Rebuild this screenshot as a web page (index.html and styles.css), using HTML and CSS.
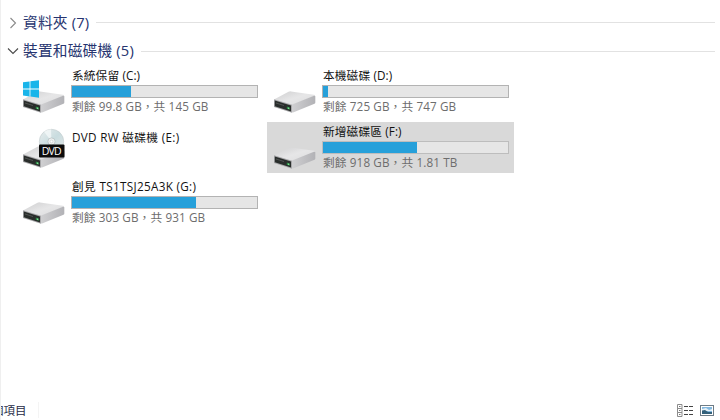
FILE: index.html
```html
<!DOCTYPE html>
<html lang="zh-Hant-TW">
<head>
<meta charset="UTF-8">
<title>本機</title>
<link rel="stylesheet" href="styles.css">
</head>
<body>

<!-- shared drive icon -->
<svg class="defs" width="0" height="0">
  <defs>
    <linearGradient id="top" x1="0" y1="0" x2="1" y2="1">
      <stop offset="0" stop-color="#cfcfd0"/><stop offset=".5" stop-color="#e6e6e7"/><stop offset="1" stop-color="#dcdcdd"/>
    </linearGradient>
    <linearGradient id="side" x1="0" y1="0" x2="1" y2="0">
      <stop offset="0" stop-color="#d0d0d2"/><stop offset="1" stop-color="#b2b2b6"/>
    </linearGradient>
    <linearGradient id="disc" x1="0" y1="0" x2="1" y2="1">
      <stop offset="0" stop-color="#e9eeee"/><stop offset=".5" stop-color="#c9dcdf"/><stop offset="1" stop-color="#e6e9e9"/>
    </linearGradient>
    <symbol id="drive" viewBox="0 0 42 22">
      <path fill="url(#top)" d="M0 8.4 14.5 .8Q15.7 .2 17 .4L40 3.8Q41 4 41 4.8L18 14.2Z"/>
      <path fill="url(#side)" d="M17.5 13.8 40 4.8Q41.3 4.4 41.3 5.6V11.6Q41.3 12.4 40.5 12.8L19 21.6 17.5 21.6Z"/>
      <path fill="#a7a7a9" d="M0 8.2 18 13.8V21.8L0 16Z"/>
      <path fill="#292d2b" d="M.8 9.4 17 14.4V20.5L.8 15.3Z"/>
      <path fill="#515453" d="M2 11.4 10 13.9V14.9L2 12.4Z"/>
      <path fill="#2f8a48" d="M12.8 15.4 15.8 16.4V18.8L12.8 17.8Z"/>
      <circle fill="#8be59a" cx="14.6" cy="17.2" r=".7"/>
    </symbol>
  </defs>
</svg>

<div class="pane">
  <div class="group folders">
    <svg class="arrow" width="12" height="12" viewBox="0 0 12 12"><path d="M3.5 1 8.5 6 3.5 11"/></svg>
    <h2>資料夾 (7)</h2>
    <hr>
  </div>
  <div class="group devices">
    <svg class="arrow open" width="12" height="12" viewBox="0 0 12 12"><path d="M1 3.5 6 8.5 11 3.5"/></svg>
    <h2>裝置和磁碟機 (5)</h2>
    <hr>
  </div>

  <div class="tiles">
    <div class="tile">
      <svg class="icon" viewBox="0 0 42 47">
        <use href="#drive" y="25" width="42" height="22"/>
        <path fill="#19b5ea" d="M0 16.3 6.6 15.4V22.5H0ZM7.4 15.3 16 14.2V22.5H7.4ZM0 23.4H6.6V30.4L0 29.6ZM7.4 23.4H16V31.8L7.4 30.6Z"/>
      </svg>
      <div class="info">
        <div class="name">系統保留 (C:)</div>
        <div class="bar"><div class="fill" style="width:59px"></div></div>
        <div class="free">剩餘 99.8 GB，共 145 GB</div>
      </div>
    </div>

    <div class="tile">
      <svg class="icon" viewBox="0 0 42 47"><use href="#drive" y="25" width="42" height="22"/></svg>
      <div class="info">
        <div class="name">本機磁碟 (D:)</div>
        <div class="bar"><div class="fill" style="width:5px"></div></div>
        <div class="free">剩餘 725 GB，共 747 GB</div>
      </div>
    </div>

    <div class="tile">
      <svg class="icon" viewBox="0 0 42 47">
        <use href="#drive" y="24" width="42" height="22"/>
        <circle cx="28.5" cy="19.5" r="12.2" fill="url(#disc)" stroke="#c2cbcc" stroke-width=".6"/>
        <path fill="#f6fafa" opacity=".75" d="M28.5 19.5 21 9.8A12 12 0 0 1 28 7.3Z"/>
        <circle cx="28.5" cy="19.5" r="3.6" fill="#eef1f1" stroke="#b3bcbd" stroke-width=".7"/>
        <circle cx="28.5" cy="19.5" r="1.4" fill="#fff" stroke="#b3bcbd" stroke-width=".5"/>
        <rect x="16" y="22.5" width="25.5" height="13" rx="1" fill="#0c0c0c"/>
        <text class="dvd" x="28.7" y="33" text-anchor="middle" textLength="20">DVD</text>
      </svg>
      <div class="info single">
        <div class="name wide">DVD RW 磁碟機 (E:)</div>
      </div>
    </div>

    <div class="tile selected">
      <svg class="icon" viewBox="0 0 42 47"><use href="#drive" y="25" width="42" height="22"/></svg>
      <div class="info">
        <div class="name">新增磁碟區 (F:)</div>
        <div class="bar"><div class="fill" style="width:94px"></div></div>
        <div class="free">剩餘 918 GB，共 1.81 TB</div>
      </div>
    </div>

    <div class="tile">
      <svg class="icon" viewBox="0 0 42 47"><use href="#drive" y="25" width="42" height="22"/></svg>
      <div class="info">
        <div class="name wide">創見 TS1TSJ25A3K (G:)</div>
        <div class="bar"><div class="fill" style="width:124px"></div></div>
        <div class="free">剩餘 303 GB，共 931 GB</div>
      </div>
    </div>
  </div>

  <div class="status">
    <span class="count">個項目</span>
    <div class="views">
      <!-- details view -->
      <svg width="17" height="13" viewBox="0 0 17 13">
        <g fill="#fff" stroke="#8b8b8b" stroke-width="1"><path d="M.5 .5H5V4.5H.5ZM.5 4.5H5V8.5H.5ZM.5 8.5H5V12.5H.5Z"/></g>
        <path stroke="#777" d="M2 2.5H3.5M2 6.5H3.5M2 10.5H3.5"/>
        <path stroke="#444" stroke-dasharray="4 1" d="M7 2.5H16M7 6.5H16M7 10.5H16"/>
      </svg>
      <!-- large icons view -->
      <svg width="14" height="11" viewBox="0 0 14 11">
        <rect x=".5" y=".5" width="13" height="10" fill="#fff" stroke="#6e7c86"/>
        <rect x="2" y="2" width="10" height="7" fill="#83b8df"/>
        <path fill="#e5f1f8" d="M2 4 6 3 9 5 12 4V6H2Z"/>
        <path fill="#33617b" d="M2 5.5 5 5 8 7H12V9H2Z"/>
      </svg>
    </div>
  </div>
</div>

</body>
</html>
```

FILE: styles.css
```css
*{box-sizing:border-box}
body{margin:0;background:#fff;font-family:"Open Sans","Noto Sans CJK TC",sans-serif;overflow:hidden}
.defs{display:block}
.pane{width:720px;height:420px;border-left:1px solid #efefef;display:flex;flex-direction:column;overflow:hidden}

/* group headers */
.group{display:flex;align-items:center;height:28px;padding:0 5px 0 6px;flex:none}
.folders{margin-top:8px;height:29px}
.arrow{fill:none;stroke:#8a8a8a;stroke-width:1.1;margin-right:4px;flex:none}
.arrow.open{stroke:#4a4a4a}
.group h2{margin:-2px 0 0;font-size:14.7px;font-weight:400;line-height:26px;letter-spacing:.2px;color:#26346f;white-space:nowrap}
.group hr{flex:1;margin:0 0 0 7px;border:0;border-top:1px solid #e2e2e2}

/* drives */
.tiles{display:grid;grid-template-columns:247px 247px;grid-template-rows:52px 51px 51px;gap:4px;margin:1px 0 0 15px}
.tile{display:flex;padding-left:7px}
.selected{background:#d9d9d9}
.icon{width:42px;height:47px;margin-right:6px;flex:none}
.dvd{font:10.5px "Open Sans",sans-serif;fill:#fff}
.info{width:187px}
.single{padding-top:6px}
.name,.free{padding-left:1px;white-space:nowrap;font-size:11.7px;letter-spacing:.12px}
.name{height:19px;line-height:19px;color:#111}
.wide{letter-spacing:.33px}
.bar{height:13px;border:1px solid #b3b3b3;background:#e6e6e6}
.selected .bar{border-color:#bdbdbd}
.fill{height:100%;background:#26a0da}
.free{height:17px;line-height:17px;color:#6d6d6d}

/* status bar */
.status{display:flex;justify-content:space-between;align-items:center;height:18px;margin-top:auto;margin-bottom:1px;padding-right:6px}
.count{margin-left:-9px;padding-right:11px;border-right:1px solid #f4f4f4;font-size:11.5px;color:#1e2a45}
.views{display:flex;align-items:center;gap:6px}
```
